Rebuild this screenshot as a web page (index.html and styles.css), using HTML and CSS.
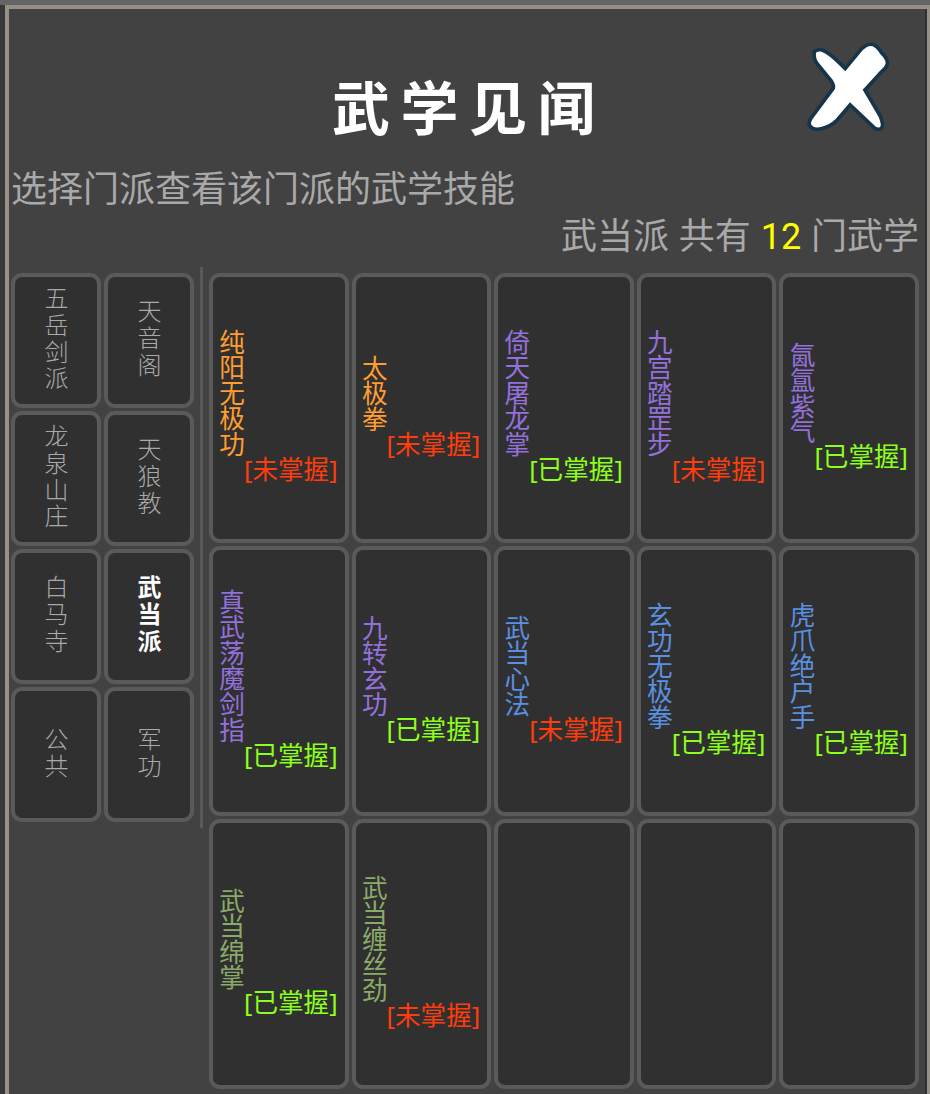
FILE: index.html
```html
<!DOCTYPE html>
<html lang="zh-CN">
<head>
    <meta charset="UTF-8">
    <meta name="viewport" content="width=device-width, initial-scale=1.0">
    <title>武学见闻</title>
    <link rel="stylesheet" href="styles.css">
</head>
<body>
    <div class="panel">
        <div class="header">
            <h1>武学见闻</h1>
            <button class="close">
                <svg width="90" height="100" viewBox="0 0 270 300">
                    <path d="M48 59 Q58 52 72 60 Q88 66 136 115 L188 52 Q205 36 218 40 Q228 44 240 62 Q258 80 257 91 Q254 103 240 113 L188 170 L236 252 Q246 278 240 282 Q232 287 222 276 L150 208 L107 258 Q88 276 65 281 Q40 288 33 273 Q32 265 44 250 L105 168 Q108 155 98 140 L55 88 Q46 75 48 59 Z"/>
                </svg>
            </button>
        </div>
        <p class="tip">选择门派查看该门派的武学技能</p>
        <p class="count">武当派 共有 <span>12</span> 门武学</p>
        <div class="content">
            <div class="sects">
                <div class="sect">五岳剑派</div>
                <div class="sect">天音阁</div>
                <div class="sect">龙泉山庄</div>
                <div class="sect">天狼教</div>
                <div class="sect">白马寺</div>
                <div class="sect active">武当派</div>
                <div class="sect">公共</div>
                <div class="sect">军功</div>
            </div>
            <div class="line"></div>
            <div class="skills">
                <div class="skill orange"><b>纯阳无极功</b><span class="no">[未掌握]</span></div>
                <div class="skill orange"><b>太极拳</b><span class="no">[未掌握]</span></div>
                <div class="skill purple"><b>倚天屠龙掌</b><span class="yes">[已掌握]</span></div>
                <div class="skill purple"><b>九宫踏罡步</b><span class="no">[未掌握]</span></div>
                <div class="skill purple"><b>氤氲紫气</b><span class="yes">[已掌握]</span></div>
                <div class="skill purple"><b>真武荡魔剑指</b><span class="yes">[已掌握]</span></div>
                <div class="skill purple"><b>九转玄功</b><span class="yes">[已掌握]</span></div>
                <div class="skill blue"><b>武当心法</b><span class="no">[未掌握]</span></div>
                <div class="skill blue"><b>玄功无极拳</b><span class="yes">[已掌握]</span></div>
                <div class="skill blue"><b>虎爪绝户手</b><span class="yes">[已掌握]</span></div>
                <div class="skill green"><b>武当绵掌</b><span class="yes">[已掌握]</span></div>
                <div class="skill green"><b>武当缠丝劲</b><span class="no">[未掌握]</span></div>
                <div class="skill"></div>
                <div class="skill"></div>
                <div class="skill"></div>
            </div>
        </div>
    </div>
</body>
</html>
```

FILE: styles.css
```css
* {
    box-sizing: border-box;
}

body {
    margin: 0;
    height: 1094px;
    padding-left: 5px;
    overflow: hidden;
    background-color: #383838;
    border-top: 5px solid #656565;
    font-family: "Noto Sans", "Noto Sans CJK SC", sans-serif;
}

h1, p {
    margin: 0;
}

.panel {
    height: 1089px;
    border: 4px solid #969086;
    border-right-width: 3px;
    border-bottom: none;
    background-color: #424242;
    box-shadow: inset -2px 0 #30302e;
}

.header {
    position: relative;
    height: 156px;
}

.header h1 {
    padding: 51px 0 0 323px;
    color: #fff;
    font-family: "Noto Sans CJK SC", sans-serif;
    font-size: 58px;
    line-height: 90px;
    font-weight: bold;
    letter-spacing: 10.5px;
}

/* 关闭按钮 */
.close {
    position: absolute;
    top: 24px;
    right: 37px;
    padding: 0;
    border: none;
    background: none;
    cursor: pointer;
}

.close svg {
    display: block;
}

.close path {
    fill: #fff;
    stroke: #16344a;
    stroke-width: 22;
    stroke-linejoin: round;
    paint-order: stroke;
}

.tip, .count {
    height: 48px;
    color: #a9a9a9;
    font-size: 36px;
    line-height: 48px;
}

.tip {
    padding-left: 2px;
}

.count {
    padding-right: 8px;
    text-align: right;
    line-height: 46px;
    word-spacing: 0.5px;
}

.count span {
    color: #ffff00;
    font-family: Roboto, sans-serif;
}

.content {
    display: flex;
    align-items: flex-start;
    padding: 6px 0 0 2px;
}

.sects {
    display: grid;
    grid-template-columns: 90px 90px;
    grid-auto-rows: 135px;
    gap: 3px;
    padding-top: 6px;
}

.sect, .skill {
    display: flex;
    justify-content: center;
    border: 4px solid #5a5a5a;
    border-radius: 11px;
    background-color: #303030;
}

.sect {
    align-items: center;
    padding-right: 1px;
    padding-bottom: 2px;
    color: #a9a9a9;
    writing-mode: vertical-rl;
    font-size: 24px;
    font-weight: 300;
    letter-spacing: 2.7px;
}

.sect.active {
    color: #fff;
    font-weight: bold;
}

.line {
    width: 3px;
    height: 561px;
    margin: 0 6px;
    background-color: #5a5a5a;
}

.skills {
    display: grid;
    grid-template-columns: repeat(5, 1fr);
    grid-auto-rows: 270px;
    gap: 3px;
    width: 710px;
    padding-top: 6px;
}

.skill {
    flex-direction: column;
    align-items: flex-start;
    padding: 0 0 4px 4px;
    font-size: 25.6px;
    line-height: 25.6px;
}

.skill b {
    writing-mode: vertical-rl;
    font-weight: normal;
}

.skill span {
    margin-left: 27px;
    white-space: nowrap;
}

.orange { color: #ff9d30; }
.purple { color: #9370db; }
.blue { color: #5b8fe0; }
.green { color: #8aab68; }
.yes { color: #8cff1a; }
.no { color: #ff3c0c; }
```
